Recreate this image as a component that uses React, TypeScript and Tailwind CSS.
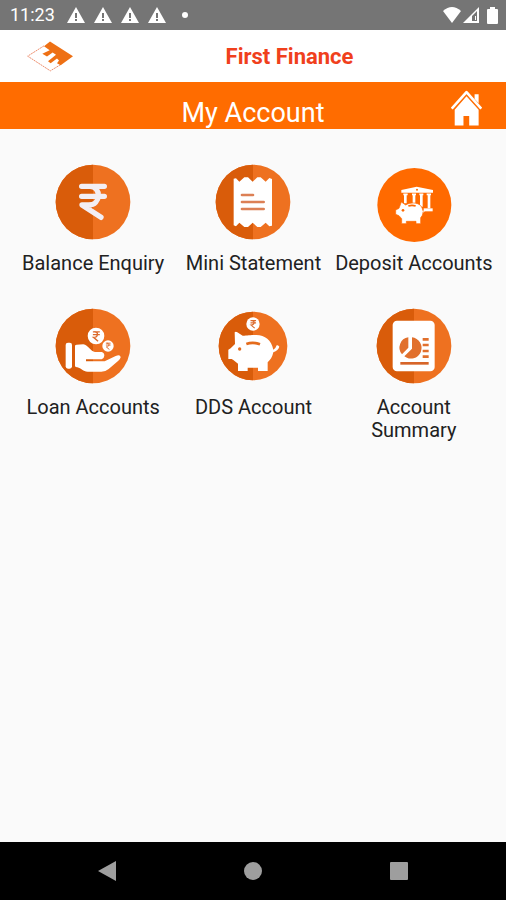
import React from "react";

interface DiscProps {
  r?: number;
}

function Disc({ r = 112 }: DiscProps) {
  return (
    <>
      <circle cx="143" cy="138" r={r} fill="#ee7120" />
      <path d={`M143 ${138 - r}A${r} ${r} 0 0 0 143 ${138 + r}Z`} fill="#d95c0a" />
    </>
  );
}

interface IconProps {
  children: React.ReactNode;
}

function Icon({ children }: IconProps) {
  return (
    <svg viewBox="-1 0 288 288" className="size-24 shrink-0" aria-hidden="true">
      {children}
    </svg>
  );
}

interface CoinProps {
  x: number;
  y: number;
  r: number;
}

function Coin({ x, y, r }: CoinProps) {
  return (
    <g transform={`translate(${x} ${y}) scale(${r / 24})`}>
      <circle r="24" fill="#fff" />
      <path
        d="M-9 -12H11M-9 -4H11M-5 -12C8 -13 7 4 -7 4L6 15"
        fill="none"
        stroke="#dc6a2c"
        strokeWidth="4"
      />
    </g>
  );
}

function RupeeIcon() {
  return (
    <Icon>
      <Disc />
      <path
        d="M109 91H177M109 121H177M134 91C169 92 167 147 130 147H110L167 184"
        fill="none"
        stroke="#f3eef4"
        strokeWidth="16"
        strokeLinecap="round"
        strokeLinejoin="round"
      />
    </Icon>
  );
}

function StatementIcon() {
  return (
    <Icon>
      <Disc />
      <path
        d="M85 68L92 67L102 77L117 64H128L142 77L156 64H166L181 77L192 66L200 69V209L192 211L181 200L166 213H156L142 200L128 213H117L102 200L92 211L85 208Z"
        fill="#fff"
      />
      <path
        d="M110 117H143M110 138H175M110 159H175"
        stroke="#dc8055"
        strokeWidth="8"
        strokeLinecap="round"
      />
    </Icon>
  );
}

function DepositIcon() {
  return (
    <Icon>
      <circle cx="144" cy="147" r="111" fill="#ff6a00" />
      <path d="M105 102L151 92L200 102V110H105Z" fill="#fff" />
      <circle cx="152" cy="101" r="3" fill="#ff6a00" />
      <path
        d="M111 115H124M137 115H149M159 115H171M181 115H194"
        stroke="#fff"
        strokeWidth="5"
      />
      <path
        d="M117 115V142M143 115V144M165 115V152M188 115V157"
        stroke="#fff"
        strokeWidth="8"
      />
      <path d="M172 157H199V166H172Z" fill="#fff" />
      <path
        d="M105 138L118 147C130 139 153 138 163 149C170 157 172 169 168 178L163 185V203H149V196H120V203H106V188L98 179L88 175V162L98 157Z"
        fill="#fff"
        stroke="#ff6a00"
        strokeWidth="2"
      />
      <path d="M167 165C173 171 176 165 172 162" fill="none" stroke="#fff" strokeWidth="3" />
      <path d="M126 150Q137 146 148 150" fill="none" stroke="#ff6a00" strokeWidth="5" />
      <circle cx="110" cy="163" r="4" fill="#ff6a00" />
    </Icon>
  );
}

function LoanIcon() {
  return (
    <Icon>
      <Disc />
      <Coin x={152} y={108} r={25} />
      <Coin x={188} y={138} r={17} />
      <rect x="61" y="128" width="19" height="78" rx="7" fill="#fff" />
      <path
        d="M89 138Q89 134 94 134L114 133C129 136 136 155 149 156H169Q177 158 177 167Q176 176 169 178H122V184H178L211 168Q225 162 226 172Q225 177 219 182L190 207Q181 215 168 215H127C113 215 108 204 96 202Q89 202 89 197Z"
        fill="#fff"
      />
    </Icon>
  );
}

function PiggyIcon() {
  return (
    <Icon>
      <Disc r={103} />
      <Coin x={143} y={72} r={20} />
      <path
        d="M88 97Q91 94 96 97L112 107C126 107 134 105 153 105C179 106 198 119 204 149Q212 144 214 136Q219 134 222 140Q219 151 204 157C201 171 195 180 187 187V213H158V203H127V213H98V191L84 180L79 177H69V149L76 145L89 132Z"
        fill="#fff"
      />
      <path d="M123 132Q143 125 164 133" fill="none" stroke="#e46b1c" strokeWidth="8" />
      <circle cx="103" cy="147" r="5" fill="#e46b1c" />
    </Icon>
  );
}

function SummaryIcon() {
  return (
    <Icon>
      <Disc />
      <rect x="79" y="62" width="126" height="152" rx="13" fill="#fff" />
      <path d="M126 112V143L107 163A31 31 0 0 1 126 112Z" fill="#e1702d" />
      <path d="M137 112A32 32 0 1 1 114 169L137 146Z" fill="#e1702d" />
      <path d="M169 118H187M169 135H187M169 153H187M169 170H187" stroke="#e1702d" strokeWidth="8" />
      <path d="M102 190H187" stroke="#d76529" strokeWidth="8" />
    </Icon>
  );
}

const MENU = [
  { label: "Balance Enquiry", icon: RupeeIcon },
  { label: "Mini Statement", icon: StatementIcon },
  { label: "Deposit Accounts", icon: DepositIcon },
  { label: "Loan Accounts", icon: LoanIcon },
  { label: "DDS Account", icon: PiggyIcon },
  { label: "Account Summary", icon: SummaryIcon },
];

function StatusBar() {
  return (
    <div className="flex h-[30px] items-center bg-[#757575] pr-2 pl-[10px] text-white">
      <span className="text-[18px] leading-6">11:23</span>
      <div className="ml-3 flex gap-[9px]">
        {[0, 1, 2, 3].map((i) => (
          <svg key={i} viewBox="0 0 18 16" className="h-4 w-[18px]" aria-hidden="true">
            <path d="M9 0L18 16H0Z" fill="#fff" />
            <path d="M9 6V11M9 12V14" stroke="#757575" strokeWidth="2" />
          </svg>
        ))}
      </div>
      <span className="ml-4 size-[6px] rounded-full bg-white" />
      <div className="ml-auto flex items-center">
        <svg viewBox="0 0 18 16" className="h-4 w-[18px]" aria-hidden="true">
          <path d="M0 4Q9 -4 18 4L9 16Z" fill="#fff" />
        </svg>
        <svg viewBox="0 0 16 16" className="ml-[2px] size-4" aria-hidden="true">
          <path
            d="M16 0V16H0ZM14 4L9 9V14H14ZM12 9H13V13H12Z"
            fill="#fff"
            fillRule="evenodd"
          />
        </svg>
        <svg viewBox="0 0 11 17" className="ml-2 h-[17px] w-[11px]" aria-hidden="true">
          <path d="M3 0H8V2H10Q11 2 11 3V16Q11 17 10 17H1Q0 17 0 16V3Q0 2 1 2H3Z" fill="#fff" />
        </svg>
      </div>
    </div>
  );
}

function Logo() {
  return (
    <svg viewBox="80 122 138 92" className="h-[31px] w-[46px]" aria-hidden="true">
      <path
        d="M131 136L82 167L150 211L180 193"
        fill="none"
        stroke="#ee9070"
        strokeWidth="3"
        strokeDasharray="6 2"
      />
      <path
        d="M149 123L218 167L181 194L170 188L176 180L170 174L151 188L143 182L167 163L157 156L140 168L126 160L148 149L131 137Z"
        fill="#ee7014"
      />
    </svg>
  );
}

export default function App() {
  return (
    <div className="flex min-h-screen flex-col bg-[#fafafa] font-[Roboto,sans-serif] text-[#212121]">
      <StatusBar />
      <header className="flex h-[52px] items-center bg-white pl-[27px]">
        <Logo />
        <h1 className="flex-1 pt-[2px] text-center text-[22px] leading-7 font-bold text-[#f0401c]">
          First Finance
        </h1>
      </header>
      <div className="grid h-[47px] grid-cols-[1fr_auto_1fr] items-center bg-[#ff6c00] px-6 text-white">
        <h2 className="col-start-2 pt-[14px] text-[27px] leading-8">My Account</h2>
        <button type="button" aria-label="Home" className="justify-self-end pt-1">
          <svg viewBox="595 272 92 106" className="h-9 w-[31px]" aria-hidden="true">
            <path
              d="M597 327L641 278L685 327"
              fill="none"
              stroke="#fff"
              strokeWidth="8"
              strokeLinejoin="round"
            />
            <path d="M665 284H677V311L665 298Z" fill="#fff" />
            <path d="M641 290L677 330V377H649V349H632V377H606V330Z" fill="#fff" />
          </svg>
        </button>
      </div>
      <main className="flex-1 pt-[27px] pr-3 pl-[13px]">
        <div className="grid grid-cols-3 gap-y-[25px]">
          {MENU.map(({ label, icon: ItemIcon }) => (
            <button
              key={label}
              type="button"
              className="flex flex-col items-center text-center text-[20px] leading-[23px]"
            >
              <ItemIcon />
              <span>{label}</span>
            </button>
          ))}
        </div>
      </main>
      <nav className="flex h-[58px] items-center justify-center gap-[126px] bg-black">
        <button type="button" aria-label="Back">
          <svg viewBox="0 0 20 20" className="size-5" aria-hidden="true">
            <path d="M19 0V20L1 10Z" fill="#9e9e9e" />
          </svg>
        </button>
        <button type="button" aria-label="Home screen">
          <svg viewBox="0 0 20 20" className="size-5" aria-hidden="true">
            <circle cx="10" cy="10" r="9" fill="#9e9e9e" />
          </svg>
        </button>
        <button type="button" aria-label="Recent apps">
          <svg viewBox="0 0 20 20" className="size-5" aria-hidden="true">
            <rect x="1" y="1" width="18" height="18" rx="1" fill="#9e9e9e" />
          </svg>
        </button>
      </nav>
    </div>
  );
}
